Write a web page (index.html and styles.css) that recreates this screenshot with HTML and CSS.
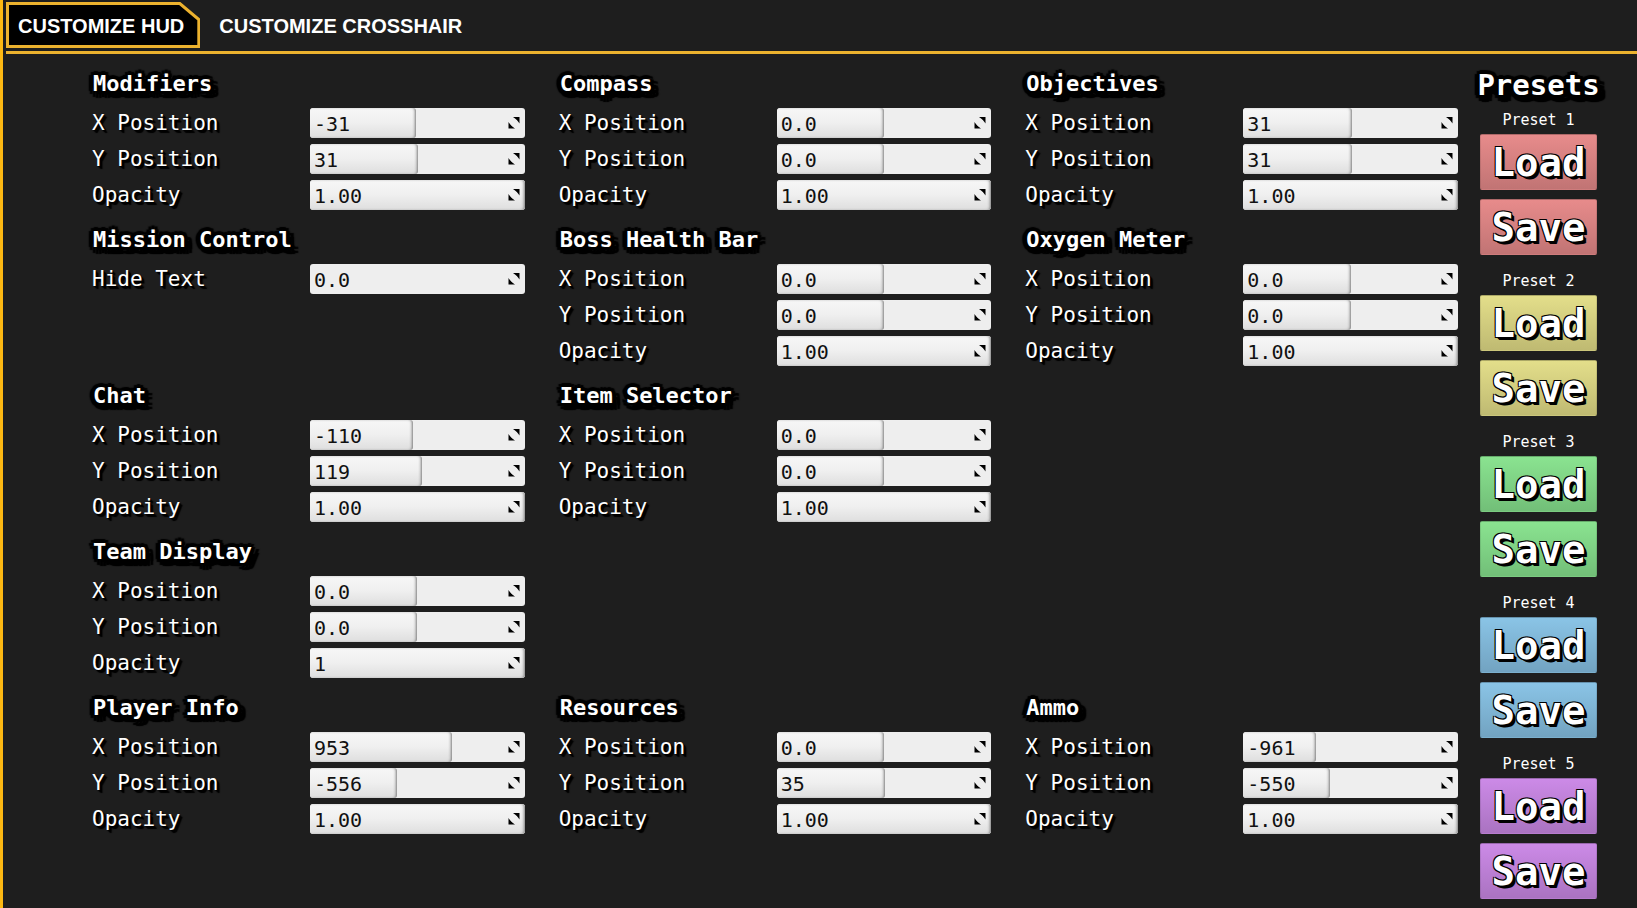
FILE: index.html
```html
<!DOCTYPE html>
<html lang="en">
<head>
    <meta charset="UTF-8">
    <meta name="viewport" content="width=device-width, initial-scale=1.0">
    <title>Customize HUD</title>
    <link rel="stylesheet" href="styles.css">
</head>
<body>
    <!-- Shared icon for the drag fields -->
    <svg class="defs" aria-hidden="true">
        <symbol id="drag" viewBox="0 0 12 12">
            <path d="M5 0h6.500v6.500C10 4 8 2 5 0z"/>
            <path d="M.5 5v6.500H7C4 9.500 2 7.500 .5 5z"/>
        </symbol>
    </svg>

    <header class="tabs">
        <button class="tab active">
            <svg class="tab-frame" viewBox="0 0 194 46" preserveAspectRatio="none" aria-hidden="true">
                <path d="M1.500 1.500H173.500L192.500 17.500V44.500H1.500Z"/>
            </svg>
            <span>CUSTOMIZE HUD</span>
        </button>
        <button class="tab">CUSTOMIZE CROSSHAIR</button>
    </header>

    <main class="content">
        <div class="groups" id="groups"></div>

        <aside class="presets">
            <h1>Presets</h1>
            <section class="preset red">
                <h3>Preset 1</h3>
                <button>Load</button>
                <button>Save</button>
            </section>
            <section class="preset yellow">
                <h3>Preset 2</h3>
                <button>Load</button>
                <button>Save</button>
            </section>
            <section class="preset green">
                <h3>Preset 3</h3>
                <button>Load</button>
                <button>Save</button>
            </section>
            <section class="preset blue">
                <h3>Preset 4</h3>
                <button>Load</button>
                <button>Save</button>
            </section>
            <section class="preset purple">
                <h3>Preset 5</h3>
                <button>Load</button>
                <button>Save</button>
            </section>
        </aside>
    </main>

    <script src="script.js"></script>
</body>
</html>
```

FILE: styles.css
```css
* {
    box-sizing: border-box;
}

body {
    margin: 0;
    min-height: 100vh;
    background: #1e1e1e;
    border-left: 3px solid #fcb813;
    color: #fff;
    font-family: "DejaVu Sans Mono", monospace;
}

h1, h2, h3 {
    margin: 0;
}

button, input {
    font-family: inherit;
}

.defs {
    display: none;
}

/* Tabs */
.tabs {
    display: flex;
    align-items: flex-start;
    margin-left: 3px;
    padding-top: 2px;
    height: 54px;
    border-bottom: 3px solid #ecb22e;
}

.tab {
    position: relative;
    height: 46px;
    padding: 2px 20px 0 19px;
    background: none;
    border: none;
    color: #fff;
    font-family: "Liberation Sans", Arial, sans-serif;
    font-size: 20px;
    font-weight: bold;
    cursor: pointer;
}

.tab.active {
    padding: 2px 16px 0 12px;
}

.tab span {
    position: relative;
}

.tab-frame {
    position: absolute;
    inset: 0;
    width: 100%;
    height: 100%;
    fill: #000;
    stroke: #ecb22e;
    stroke-width: 3;
}

/* Layout */
.content {
    display: flex;
    align-items: flex-start;
    gap: 22px;
    padding: 12px 40px 0 89px;
}

.groups {
    flex: 1;
    display: grid;
    grid-template-columns: repeat(3, 1fr);
    gap: 12px 34px;
}

.group.first {
    grid-column: 1;
}

.group h2,
.presets h1 {
    text-shadow:
        -3px -3px 1px #000, 0 -4px 1px #000, 3px -3px 1px #000,
        -5px 0 1px #000, 4px 0 1px #000, 8px 2px 1px #000,
        -4px 3px 1px #000, -1px 6px 1px #000, 2px 7px 1px #000,
        5px 7px 1px #000, 8px 6px 1px #000, 3px 3px 1px #000;
}

.group h2 {
    height: 42px;
    padding-left: 1px;
    font-size: 22px;
    line-height: 36px;
}

.row {
    display: grid;
    grid-template-columns: 218px 1fr;
    height: 30px;
    margin-bottom: 6px;
}

.row:last-child {
    margin-bottom: 0;
}

.row label {
    font-size: 21px;
    line-height: 30px;
    text-shadow: 1px 1px 1px #000, 2px 2px 1px #000, 3px 3px 1px #000;
}

.field {
    position: relative;
    overflow: hidden;
    background: #eee;
    border-radius: 3px;
}

.fill {
    position: absolute;
    top: 0;
    left: 0;
    height: 100%;
    border-radius: 3px;
    background: linear-gradient(#f7f7f7, #efefef 50%, #dedede);
    box-shadow: inset -2px 0 3px -1px #777;
}

.field input {
    position: relative;
    display: block;
    width: 100%;
    height: 30px;
    padding: 1px 24px 0 4px;
    background: none;
    border: none;
    color: #111;
    font-size: 20px;
}

.field svg {
    position: absolute;
    top: 9px;
    right: 5px;
    width: 12px;
    height: 12px;
    fill: #000;
}

/* Presets */
.presets {
    width: 117px;
    text-align: center;
}

.presets h1 {
    display: flex;
    justify-content: center;
    font-size: 29px;
    line-height: 38px;
}

.preset {
    margin-bottom: 10px;
}

.preset:last-child {
    margin-bottom: 0;
}

.preset h3 {
    height: 30px;
    font-size: 15px;
    font-weight: normal;
    line-height: 32px;
}

.preset button {
    display: block;
    width: 100%;
    height: 56px;
    padding: 0;
    border: 1px solid rgba(0, 0, 0, 0.1);
    border-radius: 2px;
    color: #fff;
    font-size: 39px;
    font-weight: bold;
    cursor: pointer;
    text-shadow:
        -1px -1px 0 #000, 1px -1px 0 #000, -1px 1px 0 #000,
        1px 1px 0 #000, 2px 2px 0 #000, 3px 3px 0 #000;
}

.preset button + button {
    margin-top: 9px;
}

.red button {
    background: linear-gradient(#e78b8b, #c17474);
}

.yellow button {
    background: linear-gradient(#e3de8a, #bfba72);
}

.green button {
    background: linear-gradient(#8ae390, #72bf78);
}

.blue button {
    background: linear-gradient(#8ac4e6, #72a3c1);
}

.purple button {
    background: linear-gradient(#cc8ae7, #aa73c1);
}
```

FILE: script.js
```js
// [label, value, fill %]
const groups = [
    { name: 'Modifiers', rows: [['X Position', '-31', 49.5], ['Y Position', '31', 50.5], ['Opacity', '1.00', 100]] },
    { name: 'Compass', rows: [['X Position', '0.0', 50], ['Y Position', '0.0', 50], ['Opacity', '1.00', 100]] },
    { name: 'Objectives', rows: [['X Position', '31', 50.5], ['Y Position', '31', 50.5], ['Opacity', '1.00', 100]] },
    { name: 'Mission Control', rows: [['Hide Text', '0.0', 0]] },
    { name: 'Boss Health Bar', rows: [['X Position', '0.0', 50], ['Y Position', '0.0', 50], ['Opacity', '1.00', 100]] },
    { name: 'Oxygen Meter', rows: [['X Position', '0.0', 50], ['Y Position', '0.0', 50], ['Opacity', '1.00', 100]] },
    { name: 'Chat', rows: [['X Position', '-110', 48.2], ['Y Position', '119', 52], ['Opacity', '1.00', 100]] },
    { name: 'Item Selector', rows: [['X Position', '0.0', 50], ['Y Position', '0.0', 50], ['Opacity', '1.00', 100]] },
    { name: 'Team Display', first: true, rows: [['X Position', '0.0', 50], ['Y Position', '0.0', 50], ['Opacity', '1', 100]] },
    { name: 'Player Info', first: true, rows: [['X Position', '953', 66], ['Y Position', '-556', 40.7], ['Opacity', '1.00', 100]] },
    { name: 'Resources', rows: [['X Position', '0.0', 50], ['Y Position', '35', 50.7], ['Opacity', '1.00', 100]] },
    { name: 'Ammo', rows: [['X Position', '-961', 34], ['Y Position', '-550', 40.5], ['Opacity', '1.00', 100]] },
];

document.getElementById('groups').innerHTML = groups.map((group, g) => `
    <section class="group ${group.first ? 'first' : ''}">
        <h2>${group.name}</h2>
        ${group.rows.map(([label, value, fill], r) => `
            <div class="row">
                <label for="field-${g}-${r}">${label}</label>
                <div class="field">
                    ${fill ? `<div class="fill" style="width: ${fill}%"></div>` : ''}
                    <input type="text" id="field-${g}-${r}" value="${value}">
                    <svg aria-hidden="true"><use href="#drag"/></svg>
                </div>
            </div>
        `).join('')}
    </section>
`).join('');
```
